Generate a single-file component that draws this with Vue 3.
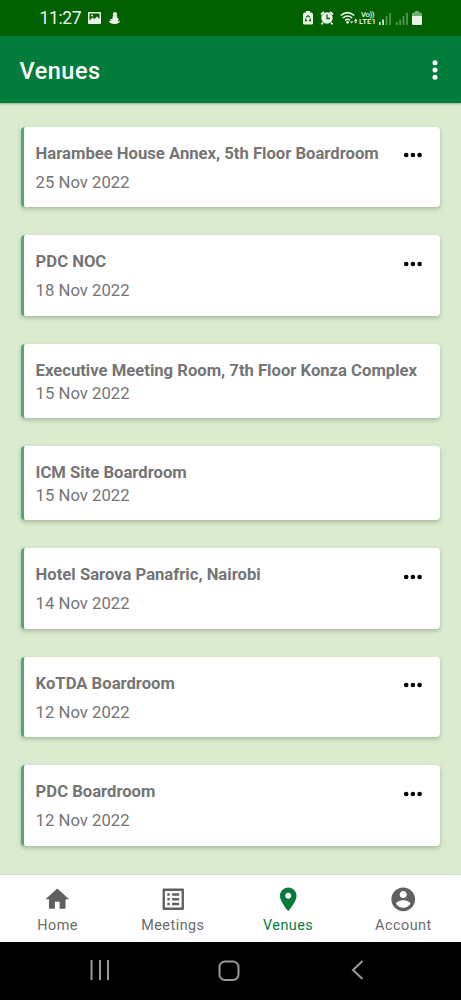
<script setup>
const venues = [
  { name: 'Harambee House Annex, 5th Floor Boardroom', date: '25 Nov 2022', menu: true },
  { name: 'PDC NOC', date: '18 Nov 2022', menu: true },
  { name: 'Executive Meeting Room, 7th Floor Konza Complex', date: '15 Nov 2022', menu: false },
  { name: 'ICM Site Boardroom', date: '15 Nov 2022', menu: false },
  { name: 'Hotel Sarova Panafric, Nairobi', date: '14 Nov 2022', menu: true },
  { name: 'KoTDA Boardroom', date: '12 Nov 2022', menu: true },
  { name: 'PDC Boardroom', date: '12 Nov 2022', menu: true },
]
const tabs = [
  { label: 'Home', path: 'M10 20v-6h4v6h5v-8h3L12 3 2 12h3v8z' },
  { label: 'Meetings', path: 'M19 5v14H5V5h14m1.1-2H3.9c-.5 0-.9.4-.9.9v16.2c0 .4.4.9.9.9h16.2c.4 0 .9-.5.9-.9V3.9c0-.5-.5-.9-.9-.9zM11 7h6v2h-6V7zm0 4h6v2h-6v-2zm0 4h6v2h-6zM7 7h2v2H7zm0 4h2v2H7zm0 4h2v2H7z' },
  { label: 'Venues', active: true, path: 'M12 2C8.130 2 5 5.130 5 9c0 5.250 7 13 7 13s7-7.750 7-13c0-3.870-3.130-7-7-7zm0 9.500c-1.380 0-2.500-1.120-2.500-2.500s1.120-2.500 2.500-2.500 2.500 1.120 2.500 2.500-1.120 2.500-2.500 2.500z' },
  { label: 'Account', path: 'M12 2C6.480 2 2 6.480 2 12s4.480 10 10 10 10-4.480 10-10S17.520 2 12 2zm0 3c1.660 0 3 1.340 3 3s-1.340 3-3 3-3-1.340-3-3 1.340-3 3-3zm0 14.200c-2.500 0-4.710-1.280-6-3.220.030-1.990 4-3.080 6-3.080 1.990 0 5.970 1.090 6 3.080-1.290 1.940-3.500 3.220-6 3.220z' },
]
</script>

<template>
  <div class="screen">
    <div class="status">
      <span class="time">11:27</span>
      <svg class="photo" width="13" height="12" viewBox="0 0 13 12">
        <path fill-rule="evenodd" d="M1 0h11q1 0 1 1v10q0 1-1 1H1q-1 0-1-1V1q0-1 1-1zM1.500 1.500v7l3-3 2 1.500 2.500-2.500L11.500 7V1.500z" />
        <circle cx="4" cy="3.500" r="1" />
      </svg>
      <svg class="figure" width="11" height="12" viewBox="0 0 11 12">
        <circle cx="6" cy="2.200" r="2.100" />
        <path d="M4 3.800h3.800l.7 2 1.500 1.700-1.200 1.500.9.700 1-1.200c1 2.200-2 3.500-5.200 3.500C2.500 12 0 11 0 9l1.800-.3L.8 7l2.400.3z" />
      </svg>
      <span class="grow"></span>
      <svg class="saver" width="10" height="14" viewBox="0 0 10 14">
        <path fill-rule="evenodd" d="M3 0h4v1.500h1.500Q10 2 10 3.500V12q0 1.500-1.500 1.500h-7Q0 13.500 0 12V3.500Q0 2 1.500 1.500H3z" />
        <path d="M3.300 6.300 5 4.500l1.700 1.800M7 7.500 7.600 9.800H5.800M4.300 9.800H2.400L3 7.500" fill="none" stroke="#006000" stroke-width="1.100" />
      </svg>
      <svg class="alarm" width="14" height="14" viewBox="0 0 14 14">
        <circle cx="7" cy="7" r="5.700" />
        <path d="M1 3.500 4 .8M13 3.500 10 .8M3 11.500l-1.500 1.800M11 11.500l1.500 1.800" stroke="#eaf3e7" stroke-width="1.800" />
        <path d="M7 3.500V7.500H10" fill="none" stroke="#006000" stroke-width="1.300" />
      </svg>
      <svg class="wifi" width="18" height="14" viewBox="0 0 18 14">
        <path d="M.7 4.500Q7.500-1.300 14.300 4.500M2.800 7Q7.500 3.200 12.200 7M5 9.300q2.500-1.900 5 0" fill="none" stroke="#eaf3e7" stroke-width="1.500" />
        <circle cx="7.500" cy="11.300" r="1.400" />
        <path d="m10 10.500 1.700 2 1.600-2zM14 10l1.700-2.500L17.400 10zM14 10.500h3.400l-1.700 2z" />
      </svg>
      <span class="volte"><b class="vo">Vo))</b><b>LTE1</b></span>
      <svg class="bars" width="12" height="13" viewBox="0 0 12 13">
        <path d="M0 10h1.600v3H0zM3.300 7.500h1.600V13H3.300z" />
        <path opacity=".4" d="M6.700 4h1.600v9H6.700zM10.200 1h1.600v12h-1.600z" />
      </svg>
      <svg class="bars dim" width="12" height="13" viewBox="0 0 12 13">
        <path d="M0 10h1.600v3H0zM3.300 7.500h1.600V13H3.300zM6.700 4h1.600v9H6.700zM10.200 1h1.600v12h-1.600z" />
      </svg>
      <svg class="battery" width="10" height="14" viewBox="0 0 10 14">
        <path opacity=".5" d="M3 0h4v1.500h1.500Q10 1.500 10 3v2H0V3q0-1.500 1.500-1.500H3z" />
        <path d="M0 5h10v7.500q0 1.500-1.500 1.500h-7Q0 14 0 12.500z" />
      </svg>
    </div>

    <header class="appbar">
      <h1>Venues</h1>
      <svg width="6" height="20" viewBox="0 0 6 20">
        <circle cx="3" cy="2.800" r="2.500" /><circle cx="3" cy="10" r="2.500" /><circle cx="3" cy="17.200" r="2.500" />
      </svg>
    </header>

    <main class="list">
      <article v-for="v in venues" :key="v.name" class="card" :class="{ compact: !v.menu }">
        <div class="row">
          <h2>{{ v.name }}</h2>
          <svg v-if="v.menu" width="20" height="6" viewBox="0 0 20 6">
            <circle cx="3.200" cy="3" r="2.300" /><circle cx="9.900" cy="3" r="2.300" /><circle cx="16.600" cy="3" r="2.300" />
          </svg>
        </div>
        <p>{{ v.date }}</p>
      </article>
    </main>

    <nav class="tabs">
      <div v-for="t in tabs" :key="t.label" class="tab" :class="{ active: t.active }">
        <svg width="28.500" height="28.500" viewBox="0 0 24 24"><path fill-rule="evenodd" :d="t.path" /></svg>
        <span>{{ t.label }}</span>
      </div>
    </nav>

    <div class="system">
      <svg width="20" height="20" viewBox="0 0 20 20"><path d="M1.500 0v20M10 0v20M18 0v20" /></svg>
      <svg width="22" height="22" viewBox="0 0 22 22"><rect x="1.500" y="1.500" width="19" height="18.500" rx="5.500" /></svg>
      <svg width="14" height="20" viewBox="0 0 14 20"><path d="M11.500 1 2 10l9.500 9" /></svg>
    </div>
  </div>
</template>

<style>
body { margin: 0; }
</style>

<style scoped>
.screen {
  width: 461px;
  height: 1000px;
  display: flex;
  flex-direction: column;
  overflow: hidden;
  background: #dbebd0;
  font-family: Roboto, "Liberation Sans", sans-serif;
}
h1, h2, p { margin: 0; }
svg { display: block; flex: none; }
.status {
  height: 36px;
  flex: none;
  display: flex;
  align-items: center;
  box-sizing: border-box;
  padding: 0 39px 0 39.500px;
  background: #006000;
  fill: #eaf3e7;
  color: #eaf3e7;
}
.time { width: 42px; font-size: 17.500px; letter-spacing: -0.350px; }
.photo { margin-left: 6.500px; }
.figure { margin-left: 8px; }
.grow { flex: 1; }
.alarm { margin-left: 7px; }
.wifi { margin-left: 6px; }
.volte { width: 18px; margin-left: 0.500px; display: flex; flex-direction: column; align-items: center; }
.volte b { font-size: 7.800px; line-height: 7px; font-weight: 500; }
.volte .vo { letter-spacing: -0.400px; }
.bars { margin-left: 2px; }
.bars.dim { margin-left: 5px; opacity: 0.400; }
.battery { margin-left: 4.500px; }
.appbar {
  height: 67px;
  flex: none;
  display: flex;
  align-items: center;
  justify-content: space-between;
  box-sizing: border-box;
  padding: 0 23.500px 0 19.500px;
  background: #027c3a;
  color: #fff;
  fill: #fff;
  box-shadow: 0 1px 2px rgba(0, 60, 20, 0.350);
}
.appbar h1 { margin-top: 2px; font-size: 23.500px; line-height: 28px; font-weight: 500; letter-spacing: 0.500px; }
.list {
  height: 772px;
  flex: none;
  box-sizing: border-box;
  padding: 23.500px 21px 0;
  display: flex;
  flex-direction: column;
  gap: 28px;
}
.card {
  height: 80.700px;
  flex: none;
  box-sizing: border-box;
  padding: 16px 17px 0 11.600px;
  border-left: 3px solid #55a47a;
  border-radius: 4px;
  background: #fff;
  color: #757575;
  box-shadow: 0 2px 4px rgba(40, 70, 30, 0.300);
}
.card.compact { height: 74px; }
.row { display: flex; justify-content: space-between; align-items: center; height: 22px; }
.row svg { margin-top: 3.500px; fill: #000; }
.card h2 { font-size: 16.650px; line-height: 22px; font-weight: 700; white-space: nowrap; }
.card p { margin-top: 7px; font-size: 16.700px; line-height: 22px; }
.card.compact p { margin-top: 1px; }
.tabs {
  height: 67px;
  flex: none;
  display: flex;
  background: #fff;
  box-shadow: 0 -1px 1px rgba(0, 0, 0, 0.040);
}
.tab {
  flex: 1;
  display: flex;
  flex-direction: column;
  align-items: center;
  padding-top: 9.500px;
  color: #6b6b6b;
  fill: #606060;
}
.tab span { margin-top: 3.500px; font-size: 14.400px; line-height: 18px; letter-spacing: 0.480px; }
.tab.active { color: #087b3b; fill: #087b3b; }
.system {
  flex: 1;
  display: flex;
  align-items: flex-start;
  box-sizing: border-box;
  padding: 18px 0 0 90px;
  background: #000;
  fill: none;
  stroke: #9a9a9a;
  stroke-width: 2;
}
.system svg:nth-child(2) { margin-left: 108px; }
.system svg:nth-child(3) { margin-left: 111px; }
</style>
